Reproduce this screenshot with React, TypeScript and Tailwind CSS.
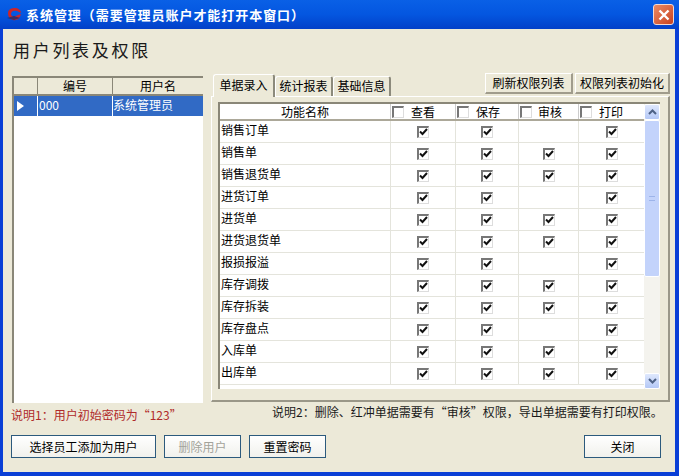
import React from "react";

const font = "font-['Noto_Sans_CJK_SC','Liberation_Sans',sans-serif]";

const rows: { name: string; audit: boolean }[] = [
    { name: "销售订单", audit: false },
    { name: "销售单", audit: true },
    { name: "销售退货单", audit: true },
    { name: "进货订单", audit: false },
    { name: "进货单", audit: true },
    { name: "进货退货单", audit: true },
    { name: "报损报溢", audit: false },
    { name: "库存调拨", audit: true },
    { name: "库存拆装", audit: true },
    { name: "库存盘点", audit: false },
    { name: "入库单", audit: true },
    { name: "出库单", audit: true },
];

const gridCols = "grid grid-cols-[170px_65px_63px_60px_66px]";

const Check = ({ checked }: { checked?: boolean }) => (
    <span className="flex h-[12px] w-[12px] shrink-0 items-center justify-center border-t-2 border-l-2 border-t-[#777] border-l-[#777] border-r border-b border-r-[#ddd] border-b-[#ddd] bg-white">
        {checked && (
            <svg width="9" height="8" viewBox="0 0 9 8">
                <path d="M1 3.5 L3.5 6 L8 1" fill="none" stroke="#111" strokeWidth="2" />
            </svg>
        )}
    </span>
);

const HeadCell = ({ label, gap }: { label: string; gap: string }) => (
    <div className={`flex items-center border-l border-l-[#ccc] pl-[1px] ${gap}`}>
        <Check />
        <span>{label}</span>
    </div>
);

const CheckCell = ({ checked, offset }: { checked: boolean; offset: string }) => (
    <div className={`flex items-center border-l border-l-[#e4e4dc] ${offset}`}>
        {checked && <Check checked />}
    </div>
);

const Arrow = ({ up }: { up?: boolean }) => (
    <div className="flex h-[16px] items-center justify-center rounded-[2px] border border-white bg-gradient-to-b from-[#dfe8fd] to-[#b4c8f6]">
        <svg width="9" height="6" viewBox="0 0 9 6">
            <path d={up ? "M1 5 L4.5 1.5 L8 5" : "M1 1 L4.5 4.5 L8 1"} fill="none" stroke="#4d6185" strokeWidth="2" />
        </svg>
    </div>
);

const FlatButton = ({ label, width, disabled }: { label: string; width: string; disabled?: boolean }) => (
    <button
        className={`h-[23px] ${width} border border-[#2c5a7d] bg-gradient-to-b from-white to-[#f1f1ec] text-[12px] leading-none ${disabled ? "text-[#a3a39a]" : "text-black"}`}
    >
        {label}
    </button>
);

const RaisedButton = ({ label, width }: { label: string; width: string }) => (
    <button className={`h-[21px] ${width} border-t border-l border-t-white border-l-white border-r-2 border-b-2 border-r-[#a09c8c] border-b-[#a09c8c] bg-[#ece9d8] text-[12px] leading-none text-black`}>
        {label}
    </button>
);

const Tab = ({ label, active }: { label: string; active?: boolean }) => (
    <div
        className={
            active
                ? "relative z-10 mb-[-1px] flex h-[23px] w-[62px] items-center justify-center rounded-t-[3px] border-t border-l border-t-white border-l-white border-r-2 border-r-[#8c8a7c] bg-[#ece9d8] pb-[3px] text-[12px]"
                : "flex h-[20px] w-[58px] items-center justify-center rounded-t-[3px] border-t border-l border-t-white border-l-white border-r-2 border-r-[#8c8a7c] bg-[#ece9d8] pb-[1px] text-[12px]"
        }
    >
        {label}
    </div>
);

const App = () => {
    return (
        <div className={`flex h-[476px] w-[679px] flex-col overflow-hidden bg-[#0a3fd6] text-black ${font}`}>
            {/* title bar */}
            <div className="flex h-[29px] shrink-0 items-center bg-gradient-to-b from-[#0a60e6] via-[#0456e0] to-[#0340c8] pr-[5px] pl-[6px]">
                <svg width="16" height="15" viewBox="0 0 16 15" className="shrink-0">
                    <path d="M2 6 C2 2 6 1 9 1 C12 1 15 3 15 6 L11 4 C8 3 5 4 5 7 C5 10 9 10 12 8 L15 7 C14 11 11 14 7 13 C4 12 2 10 2 6 Z" fill="#c8262c" />
                    <path d="M1 11 L8 9 L14 11 L8 13 Z" fill="#16306f" opacity="0.8" />
                </svg>
                <span className="ml-[4px] text-[13px] font-bold tracking-[0.95px] whitespace-nowrap text-white">系统管理（需要管理员账户才能打开本窗口）</span>
                <div className="ml-auto flex h-[21px] w-[21px] items-center justify-center rounded-[3px] border border-[#f4d9d0] bg-gradient-to-br from-[#e98a64] to-[#c8401c]">
                    <svg width="12" height="12" viewBox="0 0 12 12">
                        <path d="M1.5 1.5 L10.5 10.5 M10.5 1.5 L1.5 10.5" stroke="#fff" strokeWidth="2.4" />
                    </svg>
                </div>
            </div>

            {/* window body */}
            <div className="mr-[4px] mb-[4px] ml-[3px] flex flex-1 flex-col bg-[#ece9d8]">
                <div className="flex h-[44px] shrink-0 items-center pb-[4px] pl-[10px] text-[17px] leading-none tracking-[2.7px] text-[#1a1a1a]">
                    用户列表及权限
                </div>

                <div className="flex">
                    {/* user list */}
                    <div className="ml-[9px] w-[191px] pt-[3px]">
                        <div className="h-[327px] border-t-2 border-l-2 border-t-[#8a8778] border-l-[#8a8778] bg-white">
                            <div className="grid h-[18px] grid-cols-[24px_75px_1fr] border-b-2 border-b-[#8a8778] bg-[#ece9d8] text-center text-[12px] leading-[16px]">
                                <div className="border-r border-r-[#8a8778]"></div>
                                <div className="border-r border-r-[#8a8778]">编号</div>
                                <div>用户名</div>
                            </div>
                            <div className="grid h-[20px] grid-cols-[24px_75px_1fr] bg-[#316ac5] text-[12px] leading-[17px] text-white">
                                <div className="flex items-center border-r border-r-white pl-[2px]">
                                    <svg width="9" height="10" viewBox="0 0 9 10">
                                        <path d="M1 0 L8 5 L1 10 Z" fill="#fff" />
                                    </svg>
                                </div>
                                <div className="border-r border-r-white pl-[1px]">000</div>
                                <div>系统管理员</div>
                            </div>
                        </div>
                        <div className="mt-[3px] -ml-[1px] text-[12px] leading-[18px] whitespace-nowrap text-[#b02a2a]">说明1：用户初始密码为“123”</div>
                    </div>

                    {/* permission panel */}
                    <div className="ml-[8px] w-[459px]">
                        <div className="flex h-[23px] items-end pl-[2px]">
                            <Tab label="单据录入" active />
                            <Tab label="统计报表" />
                            <Tab label="基础信息" />
                            <div className="mb-[2px] ml-auto flex gap-[2px]">
                                <RaisedButton label="刷新权限列表" width="w-[88px]" />
                                <RaisedButton label="权限列表初始化" width="w-[95px]" />
                            </div>
                        </div>
                        <div className="h-[306px] border-t border-l border-t-white border-l-white border-r-2 border-b-2 border-r-[#9a9788] border-b-[#9a9788] pt-[5px] pl-[6px]">
                            <div className="flex h-[287px] w-[442px] border-t-2 border-l-2 border-t-[#8a8778] border-l-[#8a8778] bg-white">
                                <div className="w-[424px] text-[12px]">
                                    <div className={`${gridCols} h-[17px] border-b-2 border-b-[#aca899] leading-[15px]`}>
                                        <div className="text-center">功能名称</div>
                                        <HeadCell label="查看" gap="gap-[7px]" />
                                        <HeadCell label="保存" gap="gap-[7px]" />
                                        <HeadCell label="审核" gap="gap-[6px]" />
                                        <HeadCell label="打印" gap="gap-[7px]" />
                                    </div>
                                    {rows.map((row) => (
                                        <div key={row.name} className={`${gridCols} h-[22px] border-b border-b-[#e4e4dc] leading-[17px]`}>
                                            <div className="pl-[1px]">{row.name}</div>
                                            <CheckCell checked offset="pl-[26px]" />
                                            <CheckCell checked offset="pl-[25px]" />
                                            <CheckCell checked={row.audit} offset="pl-[24px]" />
                                            <CheckCell checked offset="pl-[27px]" />
                                        </div>
                                    ))}
                                </div>
                                <div className="flex w-[16px] flex-col bg-[#f4f3ee]">
                                    <Arrow up />
                                    <div className="relative flex-1">
                                        <div className="absolute top-0 flex h-[157px] w-full items-center justify-center rounded-[2px] border border-white bg-[#c3d3fb]">
                                            <div className="h-[5px] w-[6px] border-y border-y-[#9db4ea]"></div>
                                        </div>
                                    </div>
                                    <Arrow />
                                </div>
                            </div>
                        </div>
                        <div className="mt-[1px] pl-[61px] text-[12px] leading-[17px] whitespace-nowrap text-[#1a1a1a]">
                            说明2：删除、红冲单据需要有“审核”权限，导出单据需要有打印权限。
                        </div>
                    </div>
                </div>

                <div className="mt-auto mb-[14px] flex pr-[14px] pl-[8px]">
                    <FlatButton label="选择员工添加为用户" width="w-[145px]" />
                    <FlatButton label="删除用户" width="ml-[8px] w-[77px]" disabled />
                    <FlatButton label="重置密码" width="ml-[8px] w-[77px]" />
                    <FlatButton label="关闭" width="ml-auto w-[77px]" />
                </div>
            </div>
        </div>
    );
};

export default App;
